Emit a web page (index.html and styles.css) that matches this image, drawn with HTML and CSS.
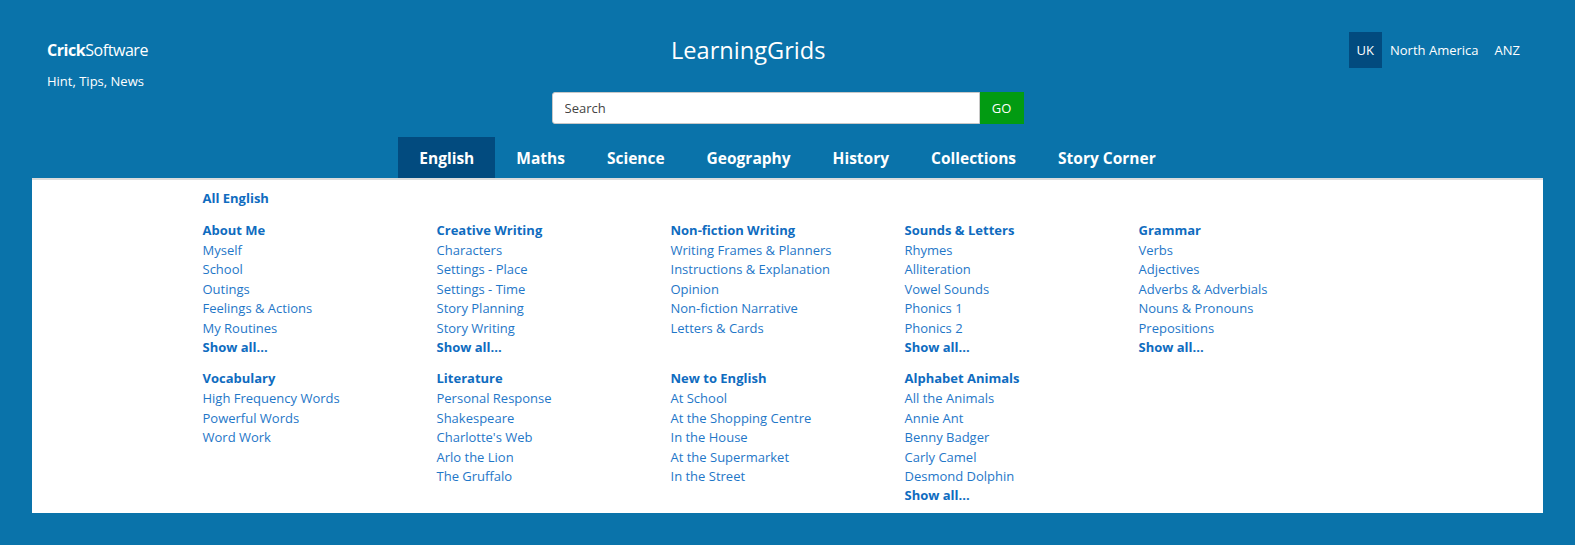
FILE: index.html
```html
<!DOCTYPE html>
<html lang="en">
<head>
<meta charset="utf-8">
<title>LearningGrids</title>
<link rel="stylesheet" href="styles.css">
</head>
<body>
<header class="header">
  <div class="top">
    <div class="brand">
      <div class="logo"><span class="logo-bold">Crick</span>Software</div>
      <div class="hint">Hint, Tips, News</div>
    </div>
    <div class="title">LearningGrids</div>
    <nav class="regions">
      <a class="region active">UK</a>
      <a class="region">North America</a>
      <a class="region">ANZ</a>
    </nav>
  </div>
  <form class="search">
    <input class="search-input" type="text" placeholder="Search">
    <button class="search-go" type="button">GO</button>
  </form>
  <nav class="tabs">
    <a class="tab active">English</a>
    <a class="tab">Maths</a>
    <a class="tab">Science</a>
    <a class="tab">Geography</a>
    <a class="tab">History</a>
    <a class="tab">Collections</a>
    <a class="tab">Story Corner</a>
  </nav>
</header>
<section class="panel">
  <div class="menu">
    <a class="all">All English</a>
    <div class="grid">
      <div class="group">
        <a class="head">About Me</a>
        <a class="item">Myself</a>
        <a class="item">School</a>
        <a class="item">Outings</a>
        <a class="item">Feelings &amp; Actions</a>
        <a class="item">My Routines</a>
        <a class="more">Show all...</a>
      </div>
      <div class="group">
        <a class="head">Creative Writing</a>
        <a class="item">Characters</a>
        <a class="item">Settings - Place</a>
        <a class="item">Settings - Time</a>
        <a class="item">Story Planning</a>
        <a class="item">Story Writing</a>
        <a class="more">Show all...</a>
      </div>
      <div class="group">
        <a class="head">Non-fiction Writing</a>
        <a class="item">Writing Frames &amp; Planners</a>
        <a class="item">Instructions &amp; Explanation</a>
        <a class="item">Opinion</a>
        <a class="item">Non-fiction Narrative</a>
        <a class="item">Letters &amp; Cards</a>
      </div>
      <div class="group">
        <a class="head">Sounds &amp; Letters</a>
        <a class="item">Rhymes</a>
        <a class="item">Alliteration</a>
        <a class="item">Vowel Sounds</a>
        <a class="item">Phonics 1</a>
        <a class="item">Phonics 2</a>
        <a class="more">Show all...</a>
      </div>
      <div class="group">
        <a class="head">Grammar</a>
        <a class="item">Verbs</a>
        <a class="item">Adjectives</a>
        <a class="item">Adverbs &amp; Adverbials</a>
        <a class="item">Nouns &amp; Pronouns</a>
        <a class="item">Prepositions</a>
        <a class="more">Show all...</a>
      </div>
      <div class="group">
        <a class="head">Vocabulary</a>
        <a class="item">High Frequency Words</a>
        <a class="item">Powerful Words</a>
        <a class="item">Word Work</a>
      </div>
      <div class="group">
        <a class="head">Literature</a>
        <a class="item">Personal Response</a>
        <a class="item">Shakespeare</a>
        <a class="item">Charlotte's Web</a>
        <a class="item">Arlo the Lion</a>
        <a class="item">The Gruffalo</a>
      </div>
      <div class="group">
        <a class="head">New to English</a>
        <a class="item">At School</a>
        <a class="item">At the Shopping Centre</a>
        <a class="item">In the House</a>
        <a class="item">At the Supermarket</a>
        <a class="item">In the Street</a>
      </div>
      <div class="group">
        <a class="head">Alphabet Animals</a>
        <a class="item">All the Animals</a>
        <a class="item">Annie Ant</a>
        <a class="item">Benny Badger</a>
        <a class="item">Carly Camel</a>
        <a class="item">Desmond Dolphin</a>
        <a class="more">Show all...</a>
      </div>
    </div>
  </div>
</section>
</body>
</html>
```
FILE: styles.css
```css
* { box-sizing: border-box; }
html, body {
  margin: 0;
  background: #0a73aa;
  font-family: "Open Sans", "Noto Sans", sans-serif;
  color: #fff;
}
a { text-decoration: none; cursor: pointer; }
.header { padding: 32px 47px 0; }
.top {
  display: flex;
  justify-content: space-between;
  align-items: flex-start;
}
.brand { padding-top: 7px; }
.logo { font-size: 16px; line-height: 22px; letter-spacing: -0.45px; }
.logo-bold { font-weight: 700; }
.hint { font-size: 13px; line-height: 18px; margin-top: 11px; }
.title { font-size: 23.6px; line-height: 36px; }
.regions { display: flex; }
.region {
  color: #fff;
  font-size: 13px;
  line-height: 36px;
  padding: 0 8px;
}
.region.active { background: #024b7f; }
.search {
  display: flex;
  justify-content: center;
  margin-top: 2px;
}
.search-input {
  width: 428px;
  height: 32px;
  border: 1px solid #c8c8c8;
  border-radius: 3px 0 0 3px;
  padding: 0 12px;
  font-family: inherit;
  font-size: 13px;
  color: #333;
  outline: none;
}
.search-input::placeholder { color: #444; }
.search-go {
  width: 44px;
  height: 32px;
  border: 0;
  background: #029b12;
  color: #fff;
  font-family: inherit;
  font-size: 13px;
  padding: 0;
}
.tabs {
  display: flex;
  justify-content: center;
  margin-top: 13px;
}
.tab {
  color: #fff;
  font-weight: 700;
  font-size: 15.5px;
  line-height: 40px;
  padding: 1px 21px 0;
}
.tab.active { background: #024b7f; }
.panel {
  margin: 0 32px;
  background: #fff;
  border-top: 2px solid #dcdcdc;
  padding: 9px 0 7px;
}
.menu { width: 1170px; margin: 0 auto; }
.all, .head, .more, .item {
  display: block;
  font-size: 13px;
  line-height: 19.4px;
}
.all, .head, .more { font-weight: 700; color: #0f6cc0; }
.head { margin-bottom: 0.6px; }
.item { color: #1f77c8; }
.all { margin-bottom: 12.6px; }
.grid {
  display: grid;
  grid-template-columns: repeat(5, 234px);
  row-gap: 12px;
}
```
